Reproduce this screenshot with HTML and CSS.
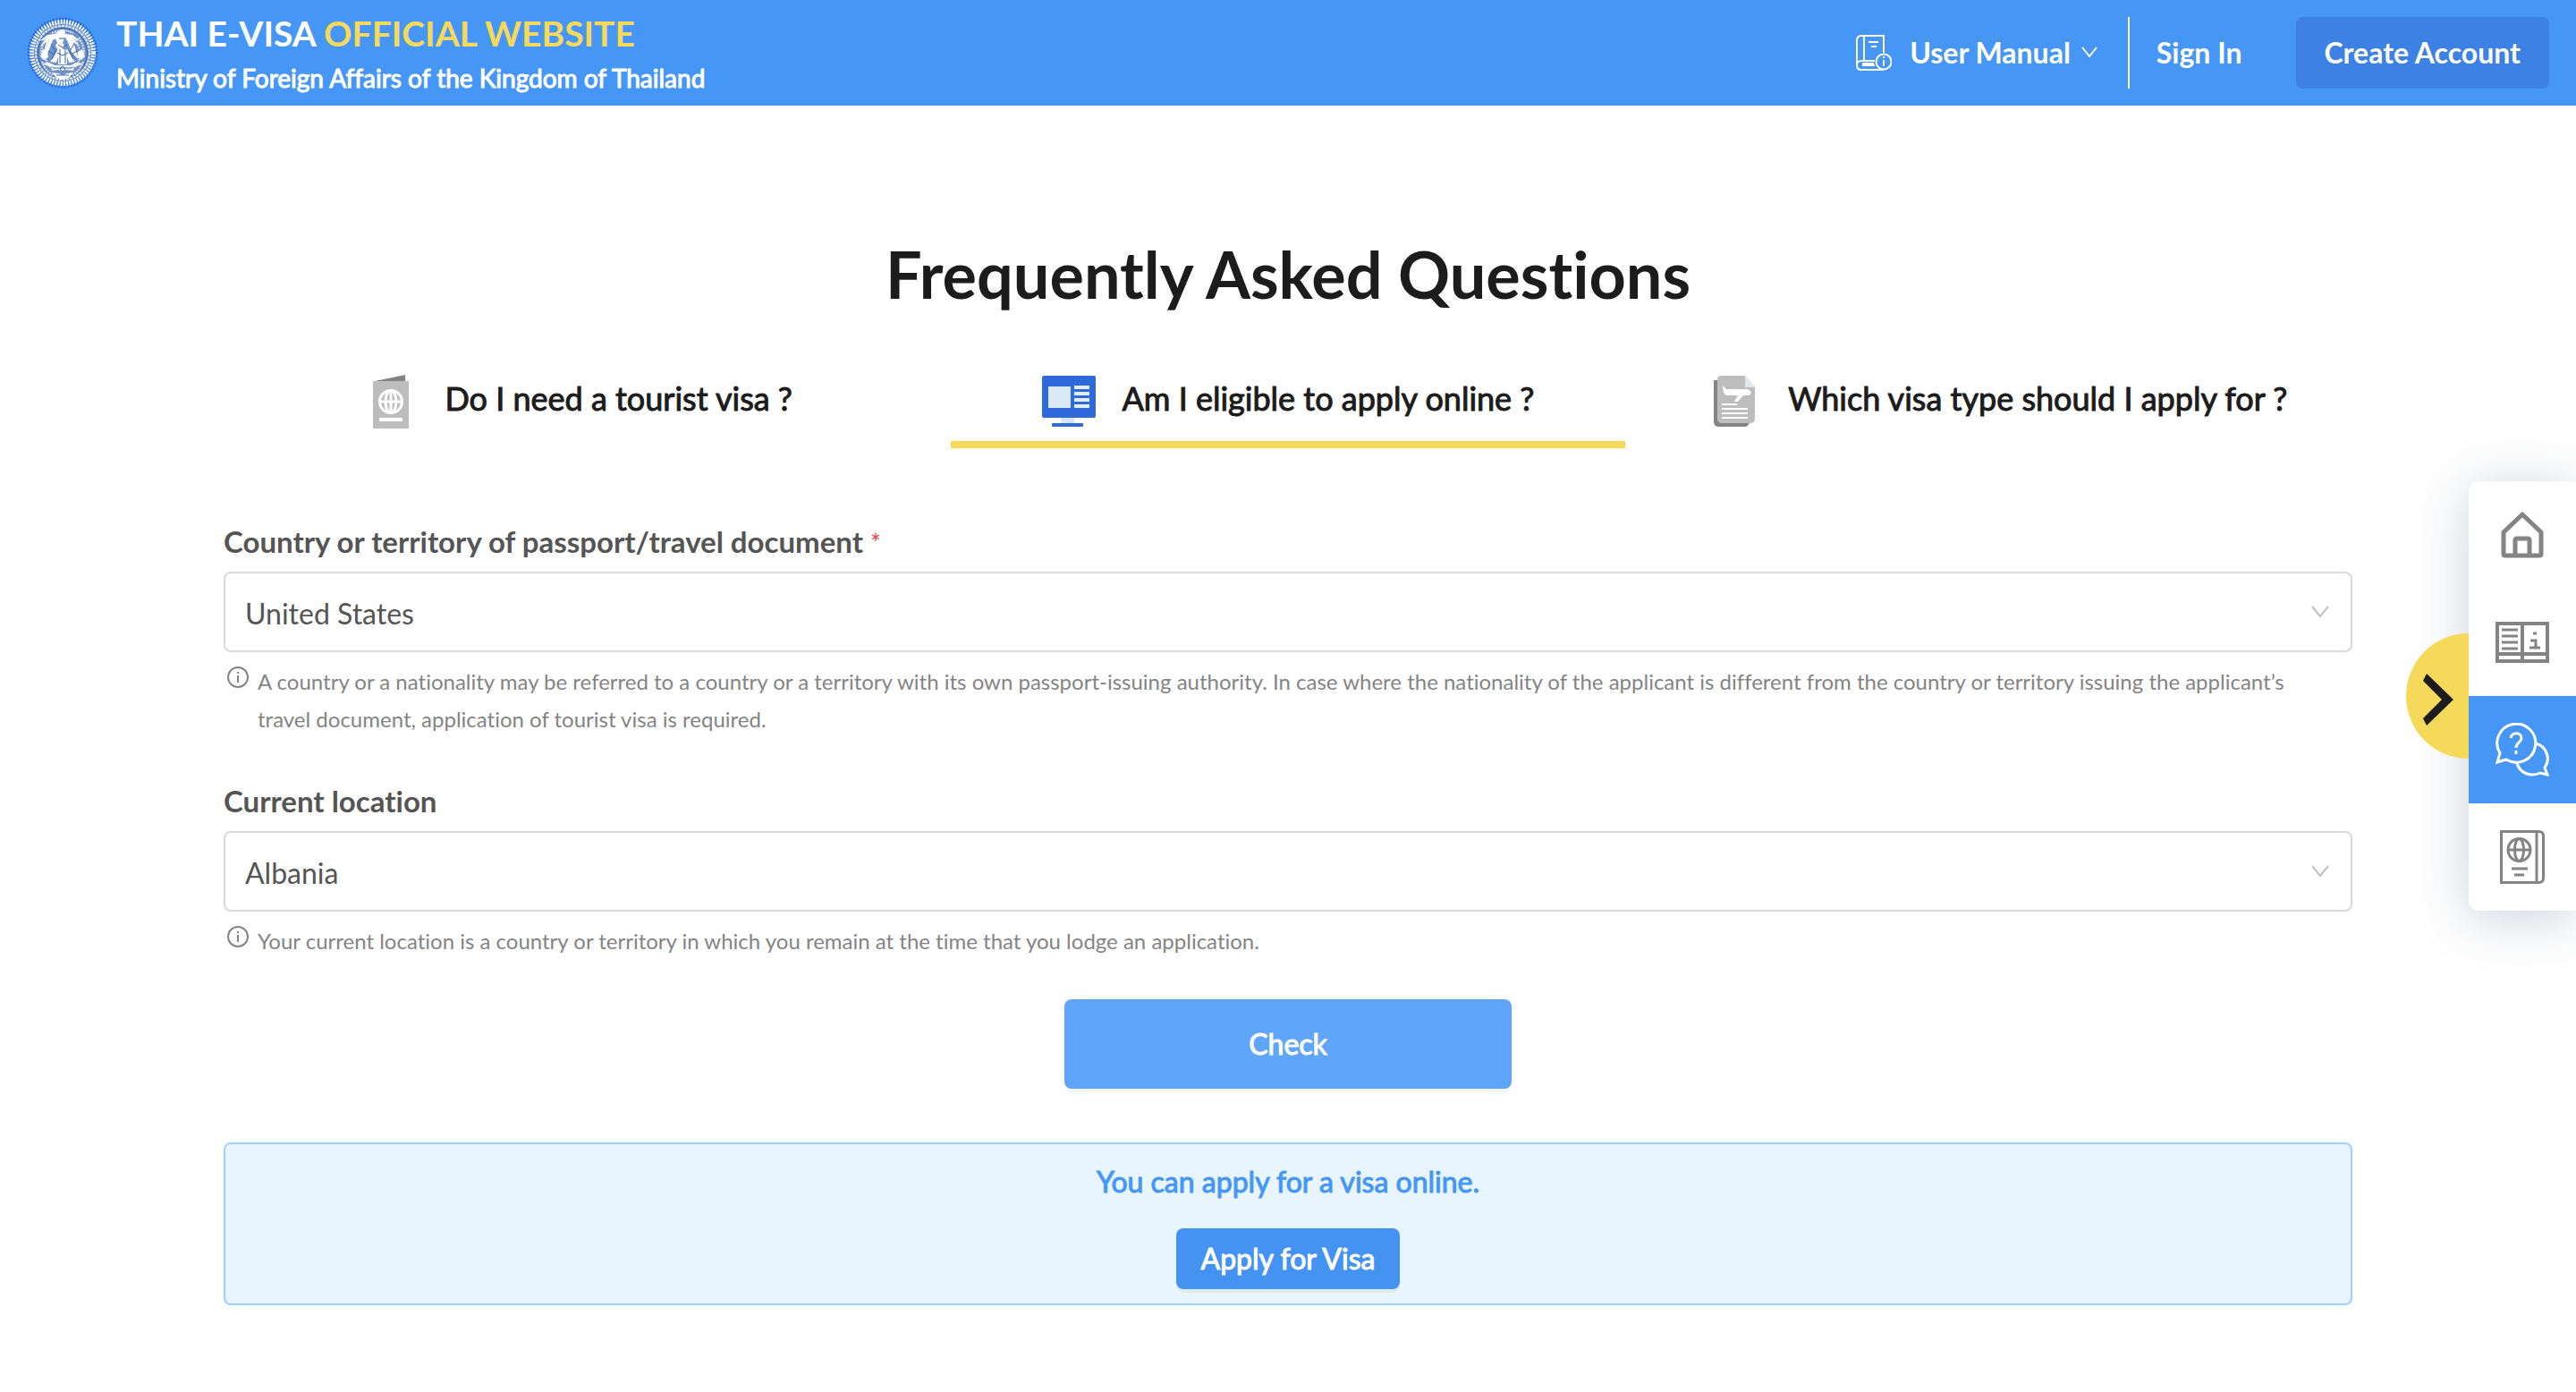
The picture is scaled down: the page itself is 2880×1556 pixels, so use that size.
FILE: index.html
```html
<!DOCTYPE html>
<html lang="en">
<head>
    <meta charset="UTF-8">
    <meta name="viewport" content="width=device-width, initial-scale=1">
    <title>Thai E-Visa Official Website</title>
    <link rel="stylesheet" href="styles.css">
</head>
<body>
<header class="header">
    <a class="brand" href="#">
        <svg class="emblem" viewBox="0 0 80 80" fill="none" aria-hidden="true">
            <circle cx="40" cy="40" r="37" stroke="#2f6bd8" stroke-width="5" stroke-dasharray="2 1.4"/>
            <circle cx="40" cy="40" r="34" fill="#6f93c8"/>
            <circle cx="40" cy="40" r="34.5" stroke="#fff" stroke-width="5" stroke-dasharray="1.8 1.4"/>
            <circle cx="40" cy="40" r="30" stroke="#e4e8ee" stroke-width="2" stroke-dasharray="3 1"/>
            <circle cx="40" cy="40" r="27.5" stroke="#2c5fae" stroke-width="1"/>
            <g fill="#fff">
                <path d="M38 14h4l1 5 8 1 9 7-7-2 6 8-7-5 3 10 2 9-7-8-5-13-3-2-2 5 2 3-3 5h-4l-3-5 2-3-2-5-3 2-5 13-7 8 2-9 3-10-7 5 6-8-7 2 9-7 8-1z"/>
                <path d="M35 36h10l5 9 4 5-7 1-2-7v9H35v-9l-2 7-7-1 4-5z"/>
                <path d="M18 36l5 3 1 6-5 3-4-4zM62 36l-5 3-1 6 5 3 4-4z"/>
                <path d="M17 52l8-1 6 3h18l6-3 8 1-7 3-7 1 4 4-9-1-4 2-4-2-9 1 4-4-7-1z"/>
                <path d="M28 62l7 1 5 2 5-2 7-1-5 6-7 2-7-2z"/>
            </g>
            <g stroke="#3764ad" stroke-width="1">
                <path d="M36 24h8M35 31l5 3 5-3M34 40l6 3 6-3M37 36v16M43 36v16M27 30l5 8-4 9M53 30l-5 8 4 9M24 38l5 3M56 38l-5 3M30 57h20M33 65h14"/>
                <circle cx="40" cy="58" r="2.5"/>
            </g>
            <g stroke="#e4e6ea" stroke-width="2" stroke-dasharray="2 1">
                <path d="M22 23c-4 6-6 12-6 18M58 23c4 6 6 12 6 18M25 25c-2 6-3 9-4 11M55 25c2 6 3 9 4 11M17 50c2 7 6 11 12 15M63 50c-2 7-6 11-12 15M21 47c2 6 4 8 8 11M59 47c-2 6-4 8-8 11M28 18c8-4 16-4 24 0"/>
            </g>
        </svg>
        <span class="brand-text">
            <span class="brand-title">THAI E-VISA <em>OFFICIAL WEBSITE</em></span>
            <span class="brand-sub">Ministry of Foreign Affairs of the Kingdom of Thailand</span>
        </span>
    </a>
    <nav class="nav">
        <button class="manual" type="button">
            <svg class="manual-icon" viewBox="0 0 40 40" fill="none" stroke="#fff" stroke-width="2" aria-hidden="true">
                <path d="M31 20V1H6Q1 1 1 6v28q0 5 5 5h25M1 34q0-5 5-5h15M9 1v28M14 8h11M17 13h6M7 34h14M7 32h13"/>
                <circle cx="31" cy="30" r="8.5"/>
                <path d="M31 28v7M31 24v2"/>
            </svg>
            User Manual
            <svg class="manual-arrow" viewBox="0 0 18 14" fill="none" stroke="#fff" stroke-width="2" aria-hidden="true"><path d="M1 1l8 10 8-10"/></svg>
        </button>
        <a class="sign-in" href="#">Sign In</a>
        <button class="create" type="button">Create Account</button>
    </nav>
</header>

<main class="faq">
    <h1>Frequently Asked Questions</h1>

    <!-- question tabs -->
    <div class="tabs" role="tablist">
        <button class="tab" type="button" role="tab" aria-selected="false">
            <svg class="tab-icon" viewBox="0 0 60 60" aria-hidden="true">
                <path d="M12 7L46 0v7z" fill="#848484"/>
                <path d="M10 7h40v53H10z" fill="#bdbdbd"/>
                <g fill="none" stroke="#fff" stroke-width="3">
                    <circle cx="30" cy="30" r="12.5"/>
                    <ellipse cx="30" cy="30" rx="6" ry="12.5"/>
                    <path d="M30 17v26M17 30h26"/>
                </g>
                <path d="M17 48h26v4H17z" fill="#fff"/>
            </svg>
            Do I need a tourist visa ?
        </button>
        <button class="tab active" type="button" role="tab" aria-selected="true">
            <svg class="tab-icon" viewBox="0 0 60 60" aria-hidden="true">
                <rect y="1" width="60" height="47" rx="2" fill="#2f6adb"/>
                <path d="M7 13h25v24H7z" fill="#d9e9f7"/>
                <path d="M36 12h17v4H36zM36 19h17v4H36zM36 26h17v4H36zM36 33h17v4H36z" fill="#e4ebf5"/>
                <path d="M21 48h15v7H21z" fill="#d9e6f4"/>
                <rect x="11" y="54" width="35" height="4" rx="1" fill="#2f6adb"/>
            </svg>
            Am I eligible to apply online ?
        </button>
        <button class="tab" type="button" role="tab" aria-selected="false">
            <svg class="tab-icon" viewBox="0 0 60 60" aria-hidden="true">
                <path d="M11 6H7v46q0 6 6 6h28q5 0 6-5z" fill="#848484"/>
                <path d="M15 1h27l11 13v35q0 5-5 5H17q-6 0-6-5V6q0-5 4-5z" fill="#bdbdbd"/>
                <path d="M42 1l11 13H42z" fill="#e3e7ea"/>
                <path d="M17 12l4 4h24l4 3-2 4h-7l-6 7h-4l4-7H21l-3-3z" fill="#fff"/>
                <path d="M16 32h17v2H16zM16 37h29v2H16zM16 42h29v2H16zM16 47h29v2H16z" fill="#fff"/>
            </svg>
            Which visa type should I apply for ?
        </button>
    </div>

    <form class="form">
        <div class="field">
            <label for="passport">Country or territory of passport/travel document <span class="required">*</span></label>
            <div class="select-box">
                <select id="passport">
                    <option>United States</option>
                </select>
                <svg class="select-arrow" viewBox="0 0 20 14" fill="none" stroke="#bfbfbf" stroke-width="2" aria-hidden="true"><path d="M1 1l9 11 9-11"/></svg>
            </div>
            <div class="hint">
                <svg class="hint-icon" viewBox="0 0 24 24" fill="none" stroke="#848484" stroke-width="2" aria-hidden="true"><circle cx="12" cy="12" r="11"/><path d="M12 10v8M12 6v2"/></svg>
                <p>A country or a nationality may be referred to a country or a territory with its own passport-issuing authority. In case where the nationality of the applicant is different from the country or territory issuing the applicant’s travel document, application of tourist visa is required.</p>
            </div>
        </div>
        <div class="field">
            <label for="location">Current location</label>
            <div class="select-box">
                <select id="location">
                    <option>Albania</option>
                </select>
                <svg class="select-arrow" viewBox="0 0 20 14" fill="none" stroke="#bfbfbf" stroke-width="2" aria-hidden="true"><path d="M1 1l9 11 9-11"/></svg>
            </div>
            <div class="hint">
                <svg class="hint-icon" viewBox="0 0 24 24" fill="none" stroke="#848484" stroke-width="2" aria-hidden="true"><circle cx="12" cy="12" r="11"/><path d="M12 10v8M12 6v2"/></svg>
                <p>Your current location is a country or territory in which you remain at the time that you lodge an application.</p>
            </div>
        </div>
        <button class="check" type="button">Check</button>
    </form>

    <div class="result">
        <p>You can apply for a visa online.</p>
        <button class="apply" type="button">Apply for Visa</button>
    </div>
</main>

<!-- floating side menu -->
<aside class="side">
    <button class="side-toggle" type="button" aria-label="Hide menu">
        <svg viewBox="0 0 34 60" aria-hidden="true"><path d="M4 1l30 29L4 59l-4-8 21-21L0 9z" fill="#1c1c1c"/></svg>
    </button>
    <nav class="side-menu">
        <a href="#" aria-label="Home">
            <svg viewBox="0 0 60 60" fill="none" stroke="#848484" stroke-width="5" stroke-linejoin="round" aria-hidden="true"><path d="M9 27L30 7l21 20v24q0 2-2 2H11q-2 0-2-2zM22 53V36q0-2 2-2h12q2 0 2 2v17"/></svg>
        </a>
        <a href="#" aria-label="Information">
            <svg viewBox="0 0 60 60" fill="none" stroke="#848484" stroke-width="4" aria-hidden="true"><path d="M2 9h56v42H2zM2 43h56M30 9v42"/><path stroke-width="3" d="M7 16h18M7 23h18M7 30h18M7 37h18M39 28h6v8M38 36h12M42 20h4"/></svg>
        </a>
        <a class="current" href="#" aria-label="Questions">
            <svg viewBox="0 0 60 60" fill="none" stroke="#fff" stroke-width="3" aria-hidden="true"><path d="M5 34a21.500 21.500 0 1 1 7 7L2 44zM45 23c12 3 17 17 10 27l3 8-8-2c-11 5-23 0-26-11M17 17c1-7 12-7 12 0 0 5-6 5-6 11M23 31v4"/></svg>
        </a>
        <a href="#" aria-label="Visa">
            <svg viewBox="0 0 60 60" fill="none" stroke="#848484" stroke-width="3" aria-hidden="true"><path d="M6.500 1.500h42q5 0 5 5v47q0 5-5 5h-42zM46 2v56M18 43h18M21 50h11"/><circle cx="26.500" cy="22" r="12.500"/><ellipse cx="26.500" cy="22" rx="5" ry="12.500"/><path d="M14 22h25"/></svg>
        </a>
    </nav>
</aside>
</body>
</html>
```
FILE: styles.css
```css
*{
    margin:0;
    padding:0;
    box-sizing:border-box;
}
body{
    font-family:Lato, "Open Sans", sans-serif;
    font-size:32px;
    line-height:48px;
    font-variant-ligatures:none;
    color:#1c1c1c;
    background:#fff;
}
button,select{
    font:inherit;
    font-variant-ligatures:none;
    color:inherit;
    border:none;
    background:none;
    cursor:pointer;
}
a{
    color:inherit;
    text-decoration:none;
}
svg{
    display:block;
    flex:none;
}
.header{
    min-height:118px;
    padding:0 30px;
    display:flex;
    align-items:center;
    justify-content:space-between;
    background:#4696f6;
    color:#fff;
}
.brand{
    display:flex;
    align-items:center;
    gap:20px;
}
.emblem{
    width:80px;
    height:80px;
}
.brand-text{
    display:flex;
    flex-direction:column;
}
.brand-title{
    font-size:39px;
    line-height:56px;
    font-weight:700;
}
.brand-title em{
    font-style:normal;
    color:#f5d95b;
}
.brand-sub{
    font-size:28px;
    line-height:44px;
    -webkit-text-stroke:1px;
}
.nav{
    display:flex;
    align-items:center;
    font-weight:700;
}
.manual{
    display:flex;
    align-items:center;
    gap:12px;
    padding-right:34px;
}
.manual-icon{
    width:40px;
    height:40px;
    margin-right:8px;
}
.manual-arrow{
    width:18px;
    height:14px;
}
.sign-in{
    padding:16px 60px 16px 30px;
    border-left:2px solid #fff;
}
.create{
    height:80px;
    padding:0 32px;
    border-radius:8px;
    background:#3c81e3;
}
.faq{
    padding:140px 250px 96px;
}
h1{
    font-size:72px;
    line-height:96px;
    font-weight:700;
    text-align:center;
}
.tabs{
    margin-top:43px;
    display:grid;
    grid-template-columns:repeat(3,1fr);
}
.tab{
    margin:0 20px;
    height:104px;
    display:flex;
    align-items:center;
    justify-content:center;
    gap:30px;
    font-size:36px;
    -webkit-text-stroke:1px;
    border-bottom:8px solid transparent;
}
.tab.active{
    border-color:#f5d95b;
}
.tab-icon{
    width:60px;
    height:60px;
    margin-top:8px;
}
.form{
    margin-top:80px;
}
.field{
    display:flex;
    flex-direction:column;
    min-height:290px;
    color:#555;
}
.field + .field{
    min-height:246px;
}
.field label{
    font-size:33px;
    font-weight:700;
}
.required{
    font-size:28px;
    line-height:1;
    font-weight:400;
    color:#e94b4b;
}
.select-box{
    margin-top:10px;
    position:relative;
}
select{
    appearance:none;
    width:100%;
    height:90px;
    padding:4px 60px 0 22px;
    border:2px solid #d9d9d9;
    border-radius:8px;
    background:#fff;
}
.select-arrow{
    width:20px;
    height:14px;
    position:absolute;
    top:38px;
    right:26px;
    pointer-events:none;
}
.hint{
    margin-top:12px;
    padding:0 30px 0 4px;
    display:flex;
    gap:10px;
    color:#848484;
}
.hint-icon{
    width:24px;
    height:24px;
    margin-top:4px;
}
.hint p{
    font-size:24px;
    line-height:42px;
}
.check{
    display:block;
    width:500px;
    height:100px;
    margin:0 auto;
    border-radius:8px;
    background:#5fa6fa;
    color:#fff;
    -webkit-text-stroke:1px;
    box-shadow:0 4px 0 rgba(0,0,0,.04);
}
.result{
    margin-top:60px;
    padding:18px 20px 16px;
    display:flex;
    flex-direction:column;
    align-items:center;
    gap:28px;
    border:2px solid #9fd0fb;
    border-radius:8px;
    background:#e8f5fe;
    color:#4696f6;
    -webkit-text-stroke:1px;
}
.apply{
    height:68px;
    padding:0 28px;
    border-radius:8px;
    background:#4492f1;
    color:#fff;
    box-shadow:0 4px 0 rgba(0,0,0,.04);
}
/* side menu */
.side{
    position:fixed;
    top:50%;
    right:0;
    transform:translateY(-50%);
}
.side-toggle{
    position:absolute;
    top:170px;
    left:-70px;
    width:140px;
    height:140px;
    padding:8px 0 0 19px;
    border-radius:50%;
    background:#f5d95b;
}
.side-toggle svg{
    width:34px;
    height:60px;
}
.side-menu{
    position:relative;
    width:120px;
    border-radius:12px 0 0 12px;
    background:#fff;
    overflow:hidden;
}
.side::before{
    content:"";
    position:absolute;
    inset:0;
    border-radius:12px 0 0 12px;
    box-shadow:0 8px 60px rgba(50,70,110,.25);
}
.side-menu a{
    height:120px;
    display:flex;
    align-items:center;
    justify-content:center;
}
.side-menu .current{
    background:#4696f6;
}
.side-menu svg{
    width:60px;
    height:60px;
}
```
